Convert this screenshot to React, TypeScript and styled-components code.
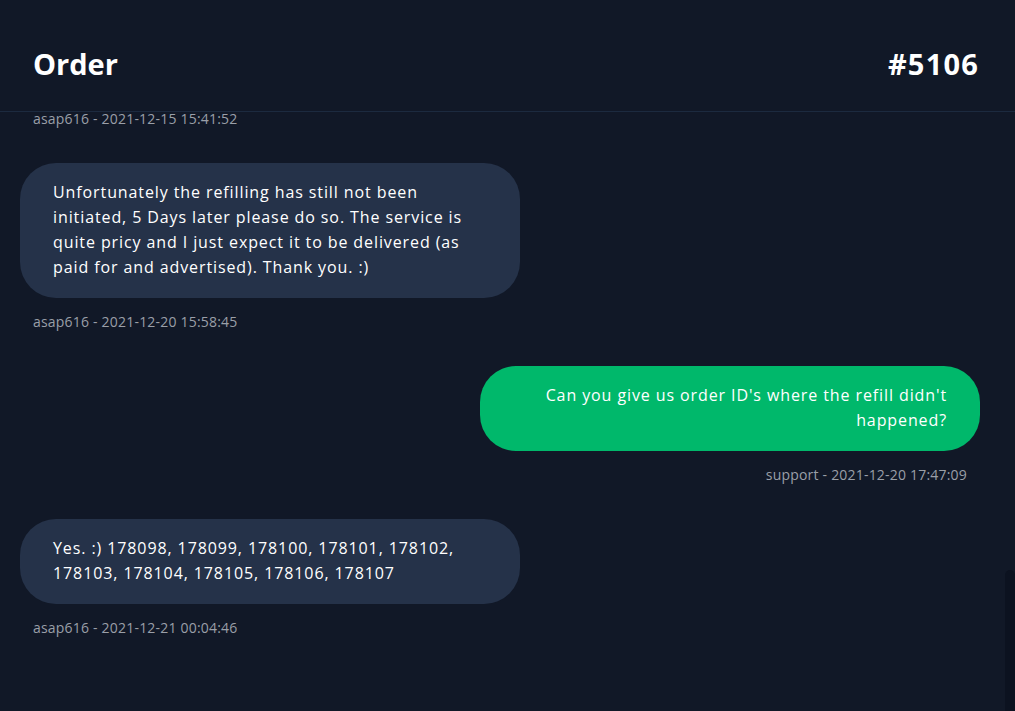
import React from "react";
import styled, { createGlobalStyle } from "styled-components";

const GlobalStyle = createGlobalStyle`
  html, body {
    margin: 0;
    padding: 0;
    background: #111827;
    height: 100%;
    overflow: hidden;
  }
  body {
    font-family: "Open Sans", "Noto Sans", sans-serif;
    color: #ffffff;
  }
  * { box-sizing: border-box; }
`;

const Page = styled.div`
  position: relative;
  width: 1015px;
  height: 711px;
  background: #111827;
  display: flex;
  flex-direction: column;
`;

const Header = styled.header`
  height: 112px;
  flex-shrink: 0;
  display: flex;
  align-items: center;
  justify-content: space-between;
  padding: 15px 37px 0 33px;
  border-bottom: 1px solid #1c2a3f;
`;

const Title = styled.h1`
  margin: 0;
  font-size: 29px;
  font-weight: 700;
  line-height: 1;
`;

const OrderNumber = styled(Title)`
  letter-spacing: 1.2px;
  margin-right: -1px;
`;

const Thread = styled.div`
  flex: 1;
  display: flex;
  flex-direction: column;
  padding: 0 35px 0 20px;
`;

const Entry = styled.div<{ $mine?: boolean }>`
  display: flex;
  flex-direction: column;
  align-items: ${(p) => (p.$mine ? "flex-end" : "flex-start")};
  margin-bottom: 34px;
`;

const TopEntry = styled(Entry)`
  margin-bottom: 37px;
`;

const Bubble = styled.div<{ $mine?: boolean }>`
  width: 500px;
  padding: 17px 33px 18px;
  border-radius: 36px;
  background: ${(p) => (p.$mine ? "#00b86b" : "#253249")};
  color: #ffffff;
  font-size: 16px;
  font-weight: 500;
  line-height: 25px;
  letter-spacing: 0.9px;
  text-align: ${(p) => (p.$mine ? "right" : "left")};
`;

const Meta = styled.div<{ $mine?: boolean }>`
  margin-top: 14px;
  padding: 0 13px;
  font-size: 14px;
  line-height: 20px;
  letter-spacing: 0.2px;
  color: #9a9fa8;
`;

const TopMeta = styled(Meta)`
  margin-top: 0;
  line-height: 14px;
`;

const ScrollThumb = styled.div`
  position: absolute;
  right: 0;
  bottom: 0;
  width: 10px;
  height: 141px;
  border-radius: 5px 5px 0 0;
  background: #0c1220;
`;

type Message = { author: string; time: string; text: string; mine?: boolean };

const messages: Message[] = [
  {
    author: "asap616",
    time: "2021-12-20 15:58:45",
    text:
      "Unfortunately the refilling has still not been initiated, 5 Days later please do so. The service is quite pricy and I just expect it to be delivered (as paid for and advertised). Thank you. :)",
  },
  {
    author: "support",
    time: "2021-12-20 17:47:09",
    text: "Can you give us order ID's where the refill didn't happened?",
    mine: true,
  },
  {
    author: "asap616",
    time: "2021-12-21 00:04:46",
    text: "Yes. :) 178098, 178099, 178100, 178101, 178102, 178103, 178104, 178105, 178106, 178107",
  },
];

export default function App() {
  return (
    <>
      <GlobalStyle />
      <Page>
        <Header>
          <Title>Order</Title>
          <OrderNumber>#5106</OrderNumber>
        </Header>
        <Thread>
          <TopEntry>
            <TopMeta>asap616 - 2021-12-15 15:41:52</TopMeta>
          </TopEntry>
          {messages.map((m, i) => (
            <Entry key={i} $mine={m.mine}>
              <Bubble $mine={m.mine}>{m.text}</Bubble>
              <Meta $mine={m.mine}>
                {m.author} - {m.time}
              </Meta>
            </Entry>
          ))}
        </Thread>
        <ScrollThumb />
      </Page>
    </>
  );
}
